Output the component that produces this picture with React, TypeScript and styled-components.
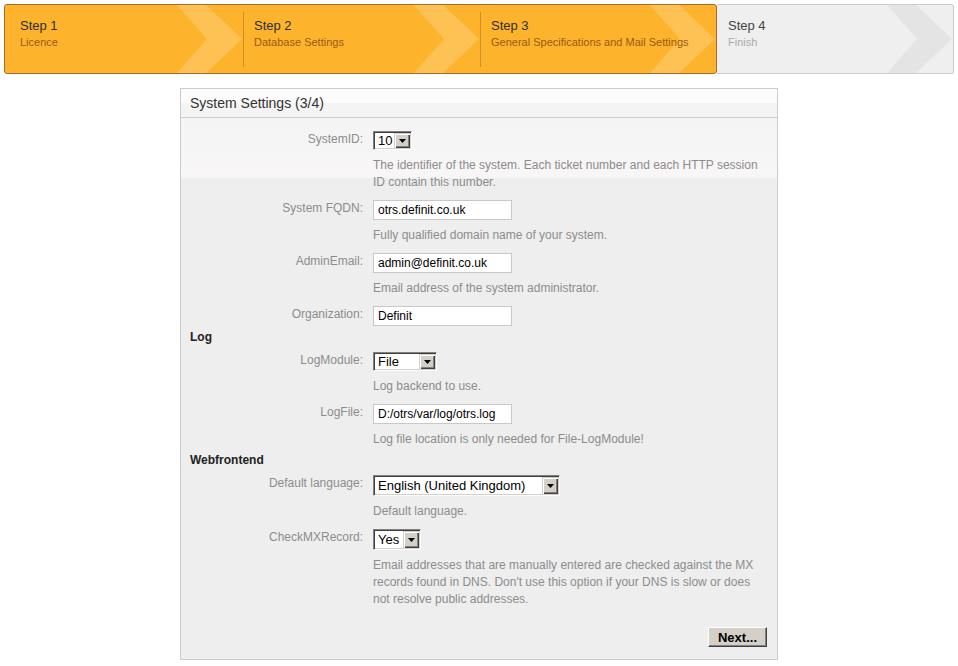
import React from 'react';
import styled, { createGlobalStyle } from 'styled-components';

const GlobalStyle = createGlobalStyle`
  html, body { margin: 0; padding: 0; background: #ffffff; }
  body {
    font-family: "Liberation Sans", Arial, sans-serif;
    font-size: 12px;
    color: #333333;
  }
  * { box-sizing: border-box; }
`;

const Page = styled.div`
  width: 958px;
  padding-top: 4px;
`;

/* ---------- Step bar ---------- */

const StepBar = styled.nav`
  display: flex;
  margin: 0 4px;
  height: 70px;
`;

const StepGroup = styled.div<{ $active?: boolean }>`
  display: flex;
  height: 70px;
  overflow: hidden;
  background: ${(p) => (p.$active ? '#fdb42c' : '#efefef')};
  border: 1px solid ${(p) => (p.$active ? '#a86c2a' : '#cccccc')};
  border-left-width: ${(p) => (p.$active ? '1px' : '0')};
  border-radius: ${(p) => (p.$active ? '3px' : '0 3px 3px 0')};
`;

const Step = styled.div<{ $width: number; $pad: number; $divider?: boolean }>`
  position: relative;
  width: ${(p) => p.$width}px;
  height: 100%;
  padding: 13px 0 0 ${(p) => p.$pad}px;
  &::before {
    content: '';
    display: ${(p) => (p.$divider ? 'block' : 'none')};
    position: absolute;
    left: 0;
    top: 7px;
    bottom: 6px;
    width: 1px;
    background: #cf8d2c;
  }
`;

const Chevron = styled.svg`
  position: absolute;
  right: 0;
  top: 0;
  width: 66px;
  height: 68px;
`;

const StepText = styled.div`
  position: relative;
`;

const StepTitle = styled.div<{ $active?: boolean }>`
  font-size: 13px;
  line-height: 16px;
  color: ${(p) => (p.$active ? '#2e2e2e' : '#444444')};
`;

const StepSub = styled.div<{ $active?: boolean }>`
  font-size: 11px;
  line-height: 14px;
  margin-top: 1px;
  color: ${(p) => (p.$active ? '#9a5912' : '#aaaaaa')};
`;

const ChevronShape = ({ color }: { color: string }) => (
  <Chevron viewBox="0 0 66 68" aria-hidden="true">
    <polygon points="0,0 29,0 65,34 29,68 0,68 30,34" fill={color} />
  </Chevron>
);

/* ---------- Settings box ---------- */

const Box = styled.section`
  width: 598px;
  margin: 14px auto 0;
  border: 1px solid #cccccc;
`;

const BoxHeader = styled.h2`
  margin: 0;
  height: 29px;
  padding: 0 9px;
  font-size: 14px;
  font-weight: normal;
  line-height: 28px;
  color: #333333;
  background: linear-gradient(#fdfbfc 0, #fdfbfc 50%, #f4f4f4 50%, #f4f4f4 100%);
  border-bottom: 1px solid #cccccc;
`;

const BoxBody = styled.div`
  padding-top: 5px;
  background: linear-gradient(#f4f4f4 0, #f8f6f7 58px, #f7f5f6 60px, #eeeeee 60px);
`;

const Field = styled.div`
  display: grid;
  grid-template-columns: 182px 1fr;
  column-gap: 10px;
  padding-top: 8px;
`;

const Label = styled.label`
  text-align: right;
  color: #8c8c8c;
  font-size: 12px;
  line-height: 14px;
  padding-top: 1px;
`;

const Control = styled.div`
  display: flex;
  flex-direction: column;
  align-items: flex-start;
`;

const Description = styled.p`
  margin: 7px 0 1px;
  max-width: 390px;
  font-size: 12px;
  line-height: 17px;
  color: #8c8c8c;
`;

const TextInput = styled.input`
  width: 139px;
  height: 20px;
  padding: 0 4px;
  border: 1px solid #c8c8c8;
  background: #ffffff;
  font-family: "Liberation Sans", Arial, sans-serif;
  font-size: 12px;
  color: #000000;
  outline: none;
`;

const SelectBox = styled.div<{ $w: number; $h: number }>`
  display: flex;
  width: ${(p) => p.$w}px;
  height: ${(p) => p.$h}px;
  padding: 1px;
  background: #ffffff;
  border: 1px solid;
  border-color: #808080 #ffffff #ffffff #808080;
  box-shadow: inset 1px 1px 0 #404040, inset -1px -1px 0 #d4d0c8;
`;

const SelectValue = styled.span`
  flex: 1;
  padding-left: 3px;
  font-size: 13px;
  color: #000000;
  display: flex;
  align-items: center;
  white-space: nowrap;
  overflow: hidden;
`;

const DropButton = styled.span`
  width: 16px;
  display: flex;
  align-items: center;
  justify-content: center;
  background: #d4d0c8;
  box-shadow: inset 1px 1px 0 #d4d0c8, inset 2px 2px 0 #ffffff, inset -1px -1px 0 #404040,
    inset -2px -2px 0 #808080;
`;

const Select = ({ value, w, h }: { value: string; w: number; h: number }) => (
  <SelectBox $w={w} $h={h} role="combobox">
    <SelectValue>{value}</SelectValue>
    <DropButton>
      <svg width="7" height="4" viewBox="0 0 7 4" aria-hidden="true">
        <polygon points="0,0 7,0 3.5,4" fill="#000" />
      </svg>
    </DropButton>
  </SelectBox>
);

const SectionHeading = styled.h3`
  margin: 4px 0 -1px;
  padding-left: 9px;
  font-size: 12px;
  font-weight: bold;
  line-height: 15px;
  color: #222222;
`;

const ButtonRow = styled.div`
  display: flex;
  justify-content: flex-end;
  padding: 18px 10px 12px;
`;

const NextButton = styled.button`
  width: 59px;
  height: 20px;
  padding: 0;
  font-family: "Liberation Sans", Arial, sans-serif;
  font-size: 13px;
  font-weight: bold;
  color: #000000;
  background: #d4d0c8;
  border: 1px solid;
  border-color: #ffffff #404040 #404040 #ffffff;
  box-shadow: inset -1px -1px 0 #808080;
  cursor: pointer;
`;

export default function App() {
  return (
    <Page>
      <GlobalStyle />
      <StepBar>
        <StepGroup $active>
          <Step $width={238} $pad={15}>
            <ChevronShape color="#fec254" />
            <StepText>
              <StepTitle $active>Step 1</StepTitle>
              <StepSub $active>Licence</StepSub>
            </StepText>
          </Step>
          <Step $width={237} $pad={11} $divider>
            <ChevronShape color="#fec254" />
            <StepText>
              <StepTitle $active>Step 2</StepTitle>
              <StepSub $active>Database Settings</StepSub>
            </StepText>
          </Step>
          <Step $width={236} $pad={11} $divider>
            <ChevronShape color="#fec254" />
            <StepText>
              <StepTitle $active>Step 3</StepTitle>
              <StepSub $active>General Specifications and Mail Settings</StepSub>
            </StepText>
          </Step>
        </StepGroup>
        <StepGroup>
          <Step $width={236} $pad={11}>
            <ChevronShape color="#e4e4e4" />
            <StepText>
              <StepTitle>Step 4</StepTitle>
              <StepSub>Finish</StepSub>
            </StepText>
          </Step>
        </StepGroup>
      </StepBar>

      <Box>
        <BoxHeader>System Settings (3/4)</BoxHeader>
        <BoxBody>
          <Field>
            <Label>SystemID:</Label>
            <Control>
              <Select value="10" w={39} h={19} />
              <Description>
                The identifier of the system. Each ticket number and each HTTP session ID contain
                this number.
              </Description>
            </Control>
          </Field>
          <Field>
            <Label>System FQDN:</Label>
            <Control>
              <TextInput defaultValue="otrs.definit.co.uk" />
              <Description>Fully qualified domain name of your system.</Description>
            </Control>
          </Field>
          <Field>
            <Label>AdminEmail:</Label>
            <Control>
              <TextInput defaultValue="admin@definit.co.uk" />
              <Description>Email address of the system administrator.</Description>
            </Control>
          </Field>
          <Field>
            <Label>Organization:</Label>
            <Control>
              <TextInput defaultValue="Definit" />
            </Control>
          </Field>

          <SectionHeading>Log</SectionHeading>
          <Field>
            <Label>LogModule:</Label>
            <Control>
              <Select value="File" w={64} h={19} />
              <Description>Log backend to use.</Description>
            </Control>
          </Field>
          <Field>
            <Label>LogFile:</Label>
            <Control>
              <TextInput defaultValue="D:/otrs/var/log/otrs.log" />
              <Description>Log file location is only needed for File-LogModule!</Description>
            </Control>
          </Field>

          <SectionHeading>Webfrontend</SectionHeading>
          <Field>
            <Label>Default language:</Label>
            <Control>
              <Select value="English (United Kingdom)" w={187} h={21} />
              <Description>Default language.</Description>
            </Control>
          </Field>
          <Field>
            <Label>CheckMXRecord:</Label>
            <Control>
              <Select value="Yes" w={48} h={21} />
              <Description>
                Email addresses that are manually entered are checked against the MX records found
                in DNS. Don't use this option if your DNS is slow or does not resolve public
                addresses.
              </Description>
            </Control>
          </Field>

          <ButtonRow>
            <NextButton type="button">Next...</NextButton>
          </ButtonRow>
        </BoxBody>
      </Box>
    </Page>
  );
}
